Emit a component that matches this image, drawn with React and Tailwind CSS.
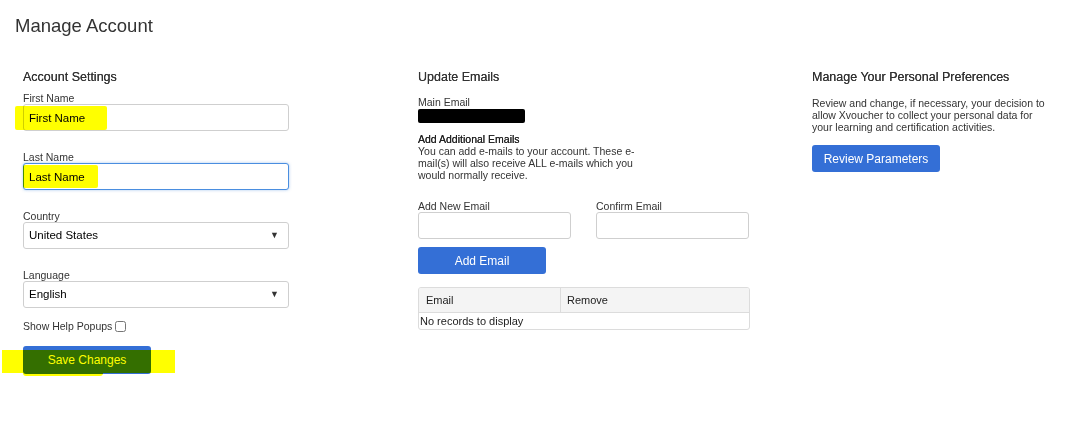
import { useState } from 'react';

const font = { fontFamily: '"Liberation Sans", Arial, sans-serif' };

function Label({ children }) {
  return <div className="text-[10.5px] leading-[12px] text-[#333]">{children}</div>;
}

function Field({ label, value, focused, highlight }) {
  return (
    <div className="mb-[20px]">
      <Label>{label}</Label>
      <div className="relative">
        <input
          readOnly
          value={value}
          className={`block w-[266px] h-[27px] rounded-[3px] bg-white px-[5px] text-[11.5px] text-black outline-none border ${focused ? 'border-[#4a8ee0] shadow-[0_0_3px_rgba(74,142,224,0.5)]' : 'border-[#cfcfcf]'}`}
        />
        {highlight}
      </div>
    </div>
  );
}

function SelectField({ label, value }) {
  return (
    <div className="mb-[20px]">
      <Label>{label}</Label>
      <div className="flex w-[266px] h-[27px] items-center justify-between rounded-[3px] border border-[#cfcfcf] bg-white pl-[5px] pr-[9px] text-[11.5px] text-black">
        <span>{value}</span>
        <span className="text-[9px] text-[#333]">▼</span>
      </div>
    </div>
  );
}

function Button({ children, className = '' }) {
  return (
    <button className={`block w-[128px] h-[27px] rounded-[3px] bg-[#346fd6] text-[12px] text-white ${className}`}>
      {children}
    </button>
  );
}

export default function App() {
  const [help, setHelp] = useState(false);

  return (
    <div className="min-h-[425px] bg-white pt-[14px] pl-[15px]" style={font}>
      <h1 className="text-[18.5px] leading-[24px] text-[#333]">Manage Account</h1>

      <div className="mt-[31px] grid grid-cols-[395px_394px_1fr] pl-[8px]">
        {/* account settings */}
        <div>
          <h2 className="mb-[7px] text-[12.5px] leading-[16px] text-[#333] [text-shadow:0_0_0.4px_#333]">Account Settings</h2>
          <Field
            label="First Name"
            value="First Name"
            highlight={<div className="pointer-events-none absolute left-[-8px] top-[2px] h-[24px] w-[92px] rounded-[2px] bg-[#ffff00] mix-blend-multiply" />}
          />
          <Field
            label="Last Name"
            value="Last Name"
            focused
            highlight={<div className="pointer-events-none absolute left-[0px] top-[2px] h-[23px] w-[75px] rounded-[2px] bg-[#ffff00] mix-blend-multiply" />}
          />
          <SelectField label="Country" value="United States" />
          <SelectField label="Language" value="English" />
          <label className="-mt-[8px] flex items-center gap-[3px] text-[10.5px] leading-[12px] text-[#333]">
            Show Help Popups
            <input type="checkbox" checked={help} onChange={() => setHelp(!help)} className="h-[11px] w-[11px] m-0" />
          </label>
          <div className="relative mt-[14px]">
            <Button className="h-[28px]">Save Changes</Button>
            <div className="pointer-events-none absolute left-[-21px] top-[4px] h-[23px] w-[173px] bg-[#ffff00] mix-blend-multiply" />
            <div className="pointer-events-none absolute left-[0px] top-[26px] h-[4px] w-[80px] rounded-b-[3px] bg-[#ffff00] mix-blend-multiply" />
          </div>
        </div>

        {/* emails */}
        <div>
          <h2 className="text-[12.5px] leading-[16px] text-[#333] [text-shadow:0_0_0.4px_#333]">Update Emails</h2>
          <div className="mt-[11px]">
            <Label>Main Email</Label>
            <div className="mt-[1px] h-[14px] w-[107px] rounded-[2px] bg-black" />
          </div>
          <div className="mt-[10px] text-[10.5px] leading-[12px] text-[#222] [text-shadow:0_0_0.5px_#222]">Add Additional Emails</div>
          <p className="text-[10.5px] leading-[12px] text-[#333]">
            You can add e-mails to your account. These e-<br />
            mail(s) will also receive ALL e-mails which you<br />
            would normally receive.
          </p>
          <div className="mt-[19px] flex gap-[25px]">
            <div>
              <Label>Add New Email</Label>
              <input className="block h-[27px] w-[153px] rounded-[3px] border border-[#cfcfcf] bg-white outline-none" />
            </div>
            <div>
              <Label>Confirm Email</Label>
              <input className="block h-[27px] w-[153px] rounded-[3px] border border-[#cfcfcf] bg-white outline-none" />
            </div>
          </div>
          <Button className="mt-[8px]">Add Email</Button>
          <div className="mt-[13px] w-[332px] overflow-hidden rounded-[3px] border border-[#dcdcdc] text-[11px] text-[#222]">
            <div className="flex h-[25px] border-b border-[#dcdcdc] bg-[#f4f4f4]">
              <div className="flex w-[142px] items-center border-r border-[#dcdcdc] pl-[7px]">Email</div>
              <div className="flex items-center pl-[6px]">Remove</div>
            </div>
            <div className="h-[16px] pl-[1px] leading-[16px]">No records to display</div>
          </div>
        </div>

        {/* preferences */}
        <div>
          <h2 className="text-[12.5px] leading-[16px] text-[#333] [text-shadow:0_0_0.4px_#333]">Manage Your Personal Preferences</h2>
          <p className="mt-[12px] text-[10.5px] leading-[12px] text-[#333]">
            Review and change, if necessary, your decision to<br />
            allow Xvoucher to collect your personal data for<br />
            your learning and certification activities.
          </p>
          <Button className="mt-[12px]">Review Parameters</Button>
        </div>
      </div>
    </div>
  );
}
